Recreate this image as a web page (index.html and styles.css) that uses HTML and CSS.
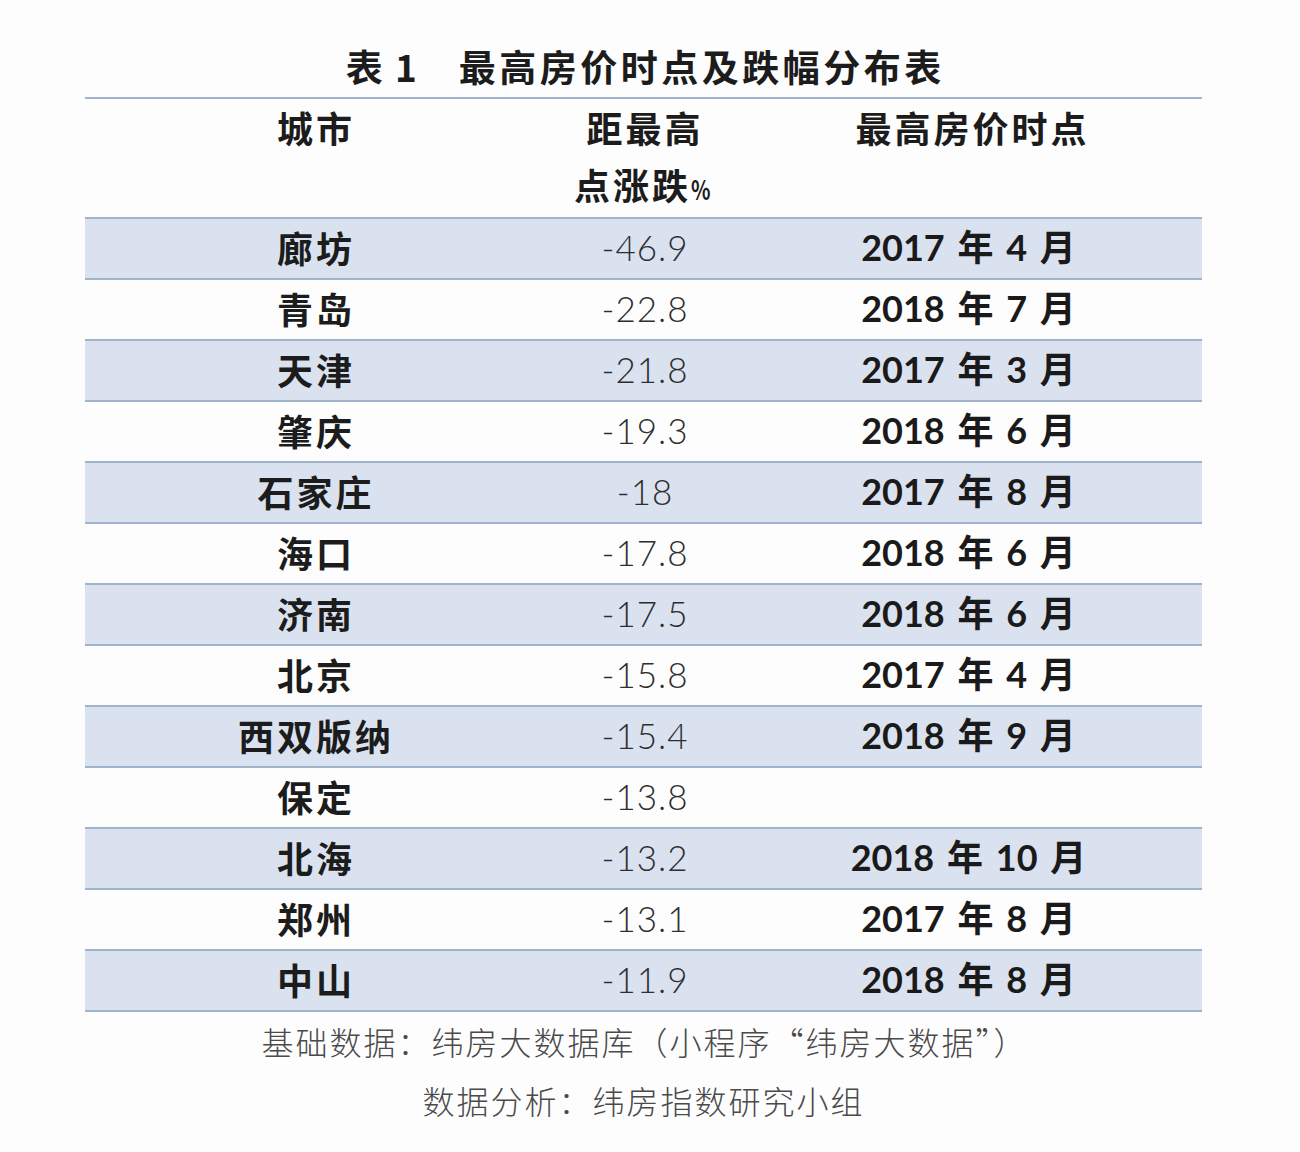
FILE: index.html
```html
<!DOCTYPE html>
<html lang="zh-CN">
<head>
<meta charset="utf-8">
<title>最高房价时点及跌幅分布表</title>
<link rel="stylesheet" href="styles.css">
</head>
<body>
<div class="page">
  <h1 class="title"><span class="num">表 1</span><span class="name">最高房价时点及跌幅分布表</span></h1>
  <table class="data">
    <colgroup>
      <col class="c1"><col class="c2"><col class="c3">
    </colgroup>
    <thead>
      <tr>
        <th class="city">城市</th>
        <th class="val-h">距最高<br>点涨跌<span class="pct">%</span></th>
        <th class="date-h">最高房价时点</th>
      </tr>
    </thead>
    <tbody>
      <tr class="alt"><td class="city">廊坊</td><td class="val">-46.9</td><td class="date">2017 年 4 月</td></tr>
      <tr><td class="city">青岛</td><td class="val">-22.8</td><td class="date">2018 年 7 月</td></tr>
      <tr class="alt"><td class="city">天津</td><td class="val">-21.8</td><td class="date">2017 年 3 月</td></tr>
      <tr><td class="city">肇庆</td><td class="val">-19.3</td><td class="date">2018 年 6 月</td></tr>
      <tr class="alt"><td class="city">石家庄</td><td class="val">-18</td><td class="date">2017 年 8 月</td></tr>
      <tr><td class="city">海口</td><td class="val">-17.8</td><td class="date">2018 年 6 月</td></tr>
      <tr class="alt"><td class="city">济南</td><td class="val">-17.5</td><td class="date">2018 年 6 月</td></tr>
      <tr><td class="city">北京</td><td class="val">-15.8</td><td class="date">2017 年 4 月</td></tr>
      <tr class="alt"><td class="city">西双版纳</td><td class="val">-15.4</td><td class="date">2018 年 9 月</td></tr>
      <tr><td class="city">保定</td><td class="val">-13.8</td><td class="date"></td></tr>
      <tr class="alt"><td class="city">北海</td><td class="val">-13.2</td><td class="date">2018 年 10 月</td></tr>
      <tr><td class="city">郑州</td><td class="val">-13.1</td><td class="date">2017 年 8 月</td></tr>
      <tr class="alt"><td class="city">中山</td><td class="val">-11.9</td><td class="date">2018 年 8 月</td></tr>
    </tbody>
  </table>
  <div class="notes">
    <p class="note1">基础数据：纬房大数据库（小程序“纬房大数据”）</p>
    <p class="note2">数据分析：纬房指数研究小组</p>
  </div>
</div>
</body>
</html>
```

FILE: styles.css
```css
html, body {
  margin: 0;
  padding: 0;
  background: #fdfdfe;
}

.page {
  width: 1117px;
  margin-left: 85px;
  padding-top: 41px;
  font-family: "Noto Sans CJK SC", "Noto Sans", sans-serif;
  color: #1a1a1a;
}

.title {
  margin: 0;
  height: 56px;
  display: flex;
  justify-content: center;
  align-items: flex-start;
  font-size: 37px;
  line-height: 50px;
  font-weight: 700;
  color: #1c1c1c;
}

.title .num {
  margin-right: 40px;
  letter-spacing: 2px;
}

.title .name {
  letter-spacing: 3.5px;
  margin-right: -3.5px;
}

.data {
  width: 1117px;
  border-collapse: collapse;
  table-layout: fixed;
  border-top: 2px solid #9fb3cb;
}

.c1 { width: 462px; }
.c2 { width: 196px; }
.c3 { width: 459px; }

.data th,
.data td {
  padding: 0;
  text-align: center;
  vertical-align: middle;
}

.data thead th {
  height: 114px;
  vertical-align: top;
  font-size: 36px;
  line-height: 57px;
  font-weight: 700;
  letter-spacing: 3px;
  color: #1c1c1c;
  border-bottom: 2px solid #9fb3cb;
}

.data thead .pct {
  font-size: 27px;
  letter-spacing: -1px;
  display: inline-block;
  transform: scaleX(0.75);
  transform-origin: left center;
}

.data tbody tr {
  height: 61px;
}

.data tbody td {
  height: 56px;
  padding-bottom: 3px;
  border-bottom: 2px solid #9fb3cb;
}

.data tbody tr.alt td {
  background: #dae2f0;
}

.data td.city {
  font-size: 36px;
  font-weight: 700;
  letter-spacing: 3px;
  color: #1c1c1c;
  line-height: 56px;
}

.data td.val {
  font-family: Lato, "Open Sans", sans-serif;
  font-weight: 300;
  font-size: 35px;
  letter-spacing: 1px;
  color: #2e2e2e;
  line-height: 56px;
}

.data td.date {
  font-family: Lato, "Noto Sans CJK SC", sans-serif;
  font-weight: 700;
  font-size: 36px;
  word-spacing: 4px;
  color: #1a1a1a;
  line-height: 56px;
  padding-right: 8px;
}

.notes {
  text-align: center;
  font-family: "Noto Sans CJK SC", sans-serif;
  font-weight: 300;
  color: #4a4a4a;
  font-size: 32px;
  letter-spacing: 2px;
}

.notes p {
  margin: 0;
  line-height: 59px;
}

.note1 {
  padding-left: 2px;
}
```
